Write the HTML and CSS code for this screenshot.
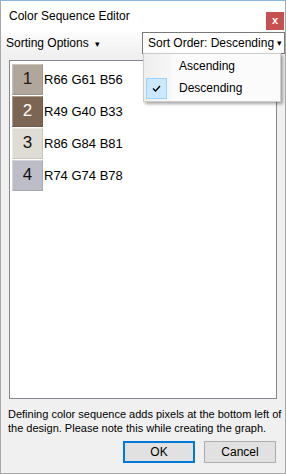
FILE: index.html
```
<!DOCTYPE html>
<html lang="en">
<head>
    <meta charset="UTF-8">
    <meta name="viewport" content="width=device-width, initial-scale=1.0">
    <title>Color Sequence Editor</title>
    <link rel="stylesheet" href="styles.css">
</head>
<body>

    <div class="window">
        <div class="title-bar">
            <span class="title">Color Sequence Editor</span>
            <div class="close-btn">x</div>
        </div>

        <div class="toolbar">
            <div class="tool-item">Sorting Options <span class="caret">&#9662;</span></div>
            <div class="tool-item sort-box">Sort Order: Descending <span class="caret">&#9662;</span></div>

            <div class="menu">
                <div class="menu-item"><span class="check"></span><span>Ascending</span></div>
                <div class="menu-item"><span class="check on">
                    <svg width="9" height="7" viewBox="0 0 9 7"><path d="M1 3.5 L3.5 6 L8 1" fill="none" stroke="#000" stroke-width="1.3"/></svg>
                </span><span>Descending</span></div>
            </div>
        </div>

        <div class="list">
            <div class="row"><div class="swatch" style="background:#b0a69b; color:#2a1a12">1</div><span>R66 G61 B56</span></div>
            <div class="row"><div class="swatch" style="background:#7d6553; color:#fff">2</div><span>R49 G40 B33</span></div>
            <div class="row"><div class="swatch" style="background:#dfdcd5; color:#111">3</div><span>R86 G84 B81</span></div>
            <div class="row"><div class="swatch" style="background:#bdbdc8; color:#111">4</div><span>R74 G74 B78</span></div>
        </div>

        <p class="note">Defining color sequence adds pixels at the bottom left of<br>the design. Please note this while creating the graph.</p>

        <div class="buttons">
            <button class="btn default">OK</button>
            <button class="btn">Cancel</button>
        </div>
    </div>

</body>
</html>
```

FILE: styles.css
```
body { margin: 0; background: #f0f0f0; font-family: 'Liberation Sans', sans-serif; font-size: 12px; color: #000; }
.window { position: relative; width: 284px; height: 472px; border: 1px solid #a8a8a8; border-top-color: #8ab9e0; background: #f0f0f0; display: flex; flex-direction: column; overflow: hidden; }
.title-bar { height: 30px; flex-shrink: 0; background: #fff; display: flex; align-items: center; justify-content: space-between; padding: 0 1px 0 8px; }
.title { font-size: 12px; margin-top: 0; }
.close-btn { width: 18px; height: 18px; margin-top: 9px; background: #c75050; color: #fff; font-weight: bold; font-size: 11px; display: flex; align-items: center; justify-content: center; line-height: 1; }

.toolbar { height: 24px; flex-shrink: 0; display: flex; align-items: center; justify-content: space-between; background: linear-gradient(#fdfdfd, #f0f0f0); position: relative; }
.tool-item { padding: 0 5px; white-space: nowrap; }
.caret { font-size: 9px; margin-left: 3px; }
.sort-box { width: 132px; border: 1px solid #7a7a7a; background: #fff; height: 20px; line-height: 20px; padding: 0 4px 0 5px; display: flex; justify-content: space-between; }

.menu { position: absolute; top: 22px; left: 142px; width: 136px; padding: 1px 0 2px; background: linear-gradient(90deg, #eeeeee, #f7f7f7 27px, #fbfbfb 28px); border: 1px solid #cccccc; box-shadow: 2px 2px 3px rgba(0,0,0,0.35); z-index: 10; }
.menu-item { height: 22px; display: flex; align-items: center; }
.check { width: 21px; height: 21px; margin: 0 12px 0 2px; display: flex; align-items: center; justify-content: center; box-sizing: border-box; }
.check.on { background: #cce8ff; border: 1px solid #99d1ff; }

.list { flex-shrink: 0; margin: 5px 8px 0 8px; height: 333px; background: #fff; border: 1px solid #828790; padding: 2px 2px; }
.row { display: flex; align-items: center; height: 32px; font-size: 13px; }
.swatch { width: 31px; height: 31px; box-sizing: border-box; border: 1px solid rgba(255,255,255,0.35); border-right-color: rgba(0,0,0,0.1); border-bottom-color: rgba(0,0,0,0.1); display: flex; align-items: center; justify-content: center; font-size: 17px; margin-right: 1px; }

.note { flex-shrink: 0; margin: 8px 6px 0 7px; font-size: 11px; line-height: 14px; white-space: nowrap; }
.buttons { display: flex; justify-content: flex-end; gap: 9px; margin: 6px 9px 0 0; }
.btn { width: 72px; height: 22px; background: #e1e1e1; border: 1px solid #adadad; font-family: 'Liberation Sans', sans-serif; font-size: 12px; padding: 0; color: #000; }
.btn.default { border: 2px solid #0078d7; }
```
